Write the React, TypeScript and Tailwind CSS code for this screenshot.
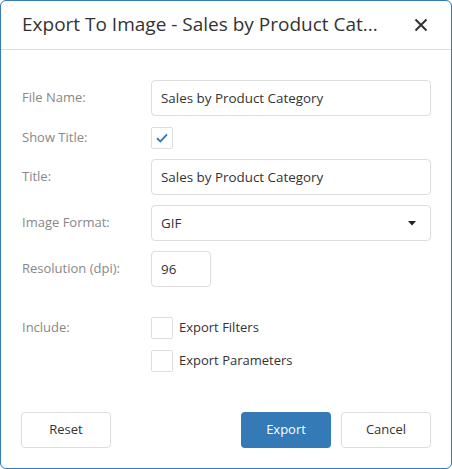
import React from "react";

const font = { fontFamily: '"Open Sans", "Noto Sans", sans-serif' };

function Label({ children }: { children: React.ReactNode }) {
  return (
    <div className="w-[129px] shrink-0 text-[13px] text-[#888888]">{children}</div>
  );
}

function Check({ checked }: { checked?: boolean }) {
  return (
    <div className="w-[22px] h-[22px] border border-[#dddddd] rounded-[2px] flex items-center justify-center bg-white shrink-0">
      {checked && (
        <svg width="12" height="10" viewBox="0 0 12 10">
          <path d="M1 5.2 L4.4 8.4 L11 1.4" fill="none" stroke="#337ab7" strokeWidth="1.9" />
        </svg>
      )}
    </div>
  );
}

export default function App() {
  return (
    <div style={font} className="w-[452px] h-[469px] bg-white border border-[#337ab7] rounded-[6px] flex flex-col text-[#333333]">
      <div className="h-[49px] shrink-0 border-b border-[#dddddd] flex items-center pl-[21px] pr-[22px] justify-between">
        <div className="text-[19px] text-[#333333] pb-[1px]">Export To Image - Sales by Product Cat...</div>
        <svg width="14" height="14" viewBox="0 0 14 14" className="mr-[1px]">
          <path d="M1.5 1.5 L12.5 12.5 M12.5 1.5 L1.5 12.5" stroke="#333333" strokeWidth="2" />
        </svg>
      </div>
      <div className="flex flex-col pl-[21px] pr-[20px] pt-[30px] flex-1">
        <div className="flex items-center h-[36px]">
          <Label>File Name:</Label>
          <div className="flex-1 h-[36px] border border-[#dddddd] rounded-[4px] flex items-center px-[9px] text-[13.4px]">Sales by Product Category</div>
        </div>
        <div className="flex items-center h-[22px] mt-[11px]">
          <Label>Show Title:</Label>
          <Check checked />
        </div>
        <div className="flex items-center h-[36px] mt-[10px]">
          <Label>Title:</Label>
          <div className="flex-1 h-[36px] border border-[#dddddd] rounded-[4px] flex items-center px-[9px] text-[13.4px]">Sales by Product Category</div>
        </div>
        <div className="flex items-center h-[36px] mt-[10px]">
          <Label>Image Format:</Label>
          <div className="flex-1 h-[36px] border border-[#dddddd] rounded-[4px] flex items-center justify-between pl-[9px] pr-[14px] text-[13.4px]">
            <span>GIF</span>
            <svg width="8" height="5" viewBox="0 0 8 5">
              <path d="M0 0 L8 0 L4 4.5 Z" fill="#222222" />
            </svg>
          </div>
        </div>
        <div className="flex items-center h-[36px] mt-[10px]">
          <Label>Resolution (dpi):</Label>
          <div className="w-[60px] h-[36px] border border-[#dddddd] rounded-[4px] flex items-center px-[9px] text-[13.4px]">96</div>
        </div>
        <div className="flex mt-[30px]">
          <div className="pt-[1px]"><Label>Include:</Label></div>
          <div className="flex flex-col">
            <div className="flex items-center h-[22px]">
              <Check />
              <span className="ml-[6px] text-[13px]">Export Filters</span>
            </div>
            <div className="flex items-center h-[22px] mt-[11px]">
              <Check />
              <span className="ml-[6px] text-[13px]">Export Parameters</span>
            </div>
          </div>
        </div>
        <div className="flex mt-[40px] items-center ml-[-1px]">
          <div className="w-[90px] h-[36px] border border-[#dddddd] rounded-[4px] flex items-center justify-center text-[13px]">Reset</div>
          <div className="flex-1" />
          <div className="w-[90px] h-[36px] bg-[#337ab7] rounded-[4px] flex items-center justify-center text-[13px] text-white">Export</div>
          <div className="w-[90px] h-[36px] ml-[10px] border border-[#dddddd] rounded-[4px] flex items-center justify-center text-[13px]">Cancel</div>
        </div>
      </div>
    </div>
  );
}
